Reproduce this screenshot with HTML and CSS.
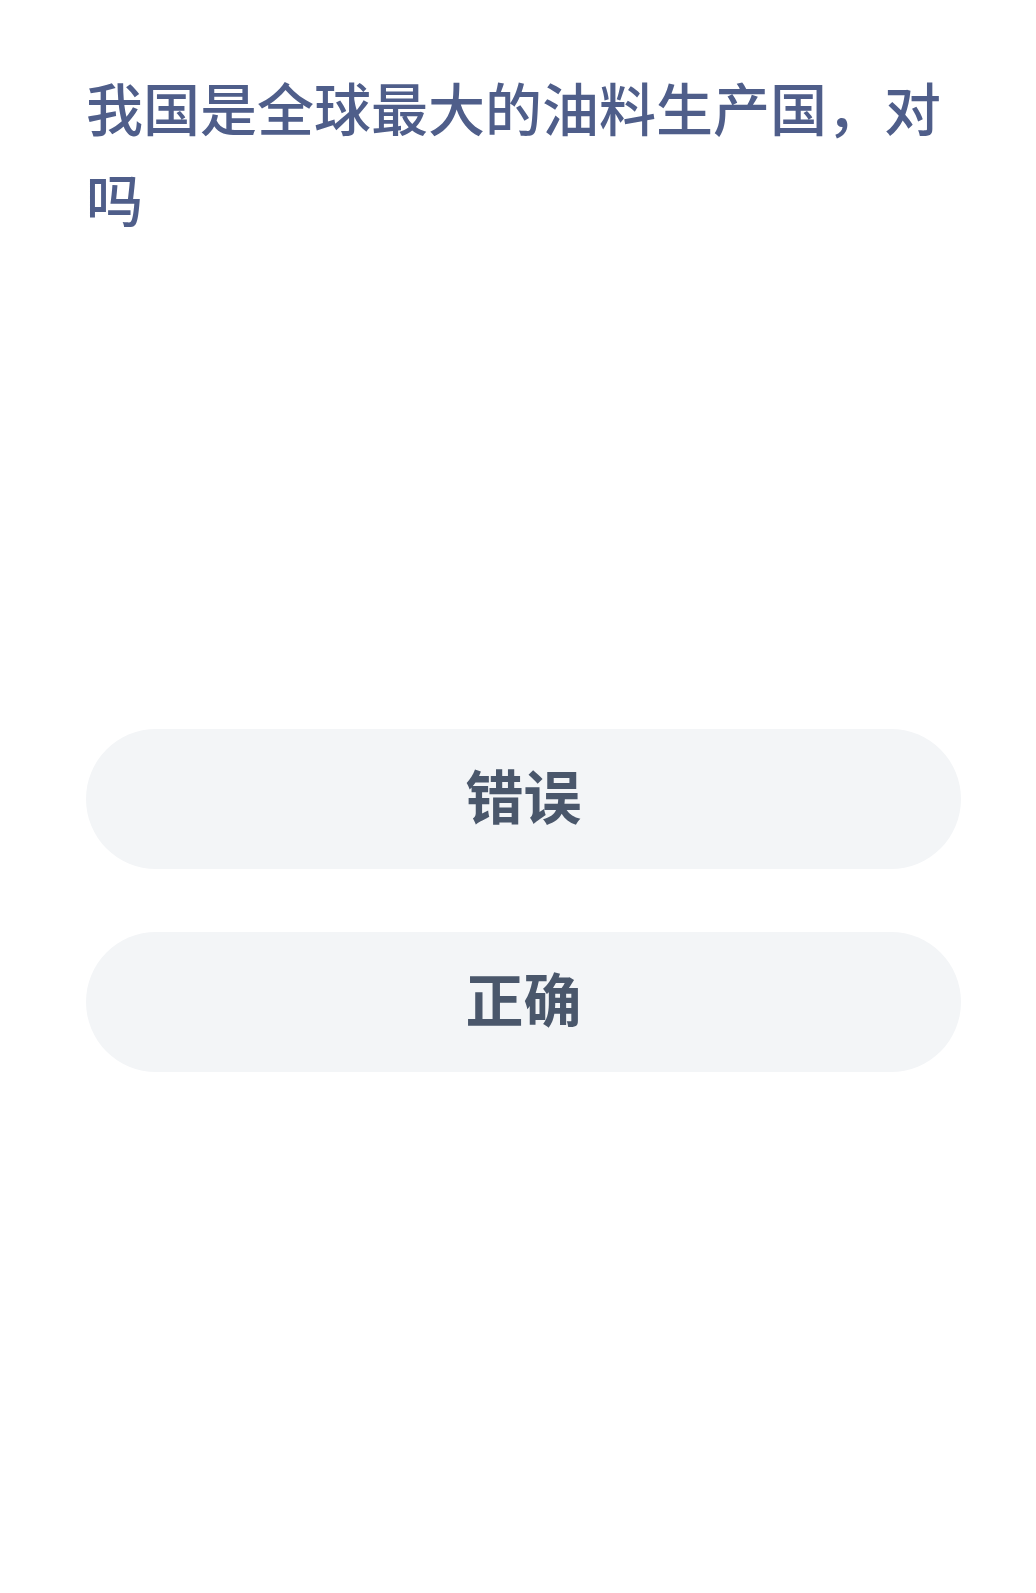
FILE: index.html
```html
<!DOCTYPE html>
<html lang="zh-CN">
<head>
    <meta charset="UTF-8">
    <title>答题</title>
    <link rel="stylesheet" href="styles.css">
</head>
<body>
<div class="quiz">
    <!-- 题目 -->
    <div class="question">我国是全球最大的油料生产国，对吗</div>
    <!-- 选项 -->
    <ul class="options">
        <li class="option">错误</li>
        <li class="option">正确</li>
    </ul>
</div>
</body>
</html>
```

FILE: styles.css
```css
*{
    margin: 0;
    padding: 0;
}
body{
    background-color: #fff;
    font-family: "Noto Sans CJK SC", "Noto Sans", sans-serif;
}
.quiz{
    padding: 61px 75px 0 86px;
}
/*题目样式*/
.quiz .question{
    font-size: 57px;
    line-height: 91px;
    font-weight: 500;
    color: #4f5e8a;
}
/*选项样式*/
.quiz .options{
    list-style: none;
    margin-top: 486px;
    display: flex;
    flex-direction: column;
    gap: 63px;
}
.quiz .option{
    height: 140px;
    border-radius: 70px;
    background-color: #f3f5f7;
    color: #4a576b;
    font-size: 58px;
    font-weight: bold;
    padding-bottom: 10px;
    box-sizing: border-box;
    display: flex;
    align-items: center;
    justify-content: center;
    cursor: pointer;
}
```
